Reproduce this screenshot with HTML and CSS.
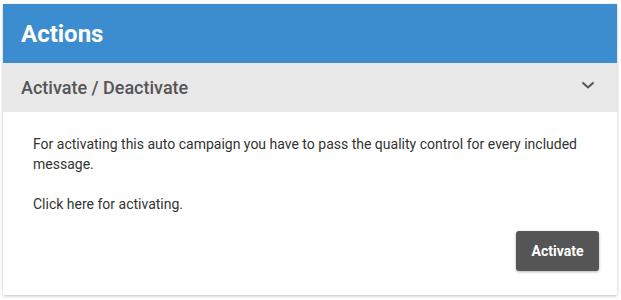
FILE: index.html
```html
<!DOCTYPE html>
<html>
<head>
<meta charset="utf-8">
<link rel="stylesheet" href="styles.css">
</head>
<body>
<div class="card">
  <div class="card-header">Actions</div>
  <div class="section-head">
    <span class="section-title">Activate / Deactivate</span>
    <svg class="chevron" width="14" height="9" viewBox="0 0 14 9"><path d="M1.5 1.5 L7 6.5 L12.5 1.5" fill="none" stroke="#555" stroke-width="2"/></svg>
  </div>
  <div class="section-body">
    <div class="text">
      <p>For activating this auto campaign you have to pass the quality control for every included message.</p>
      <p>Click here for activating.</p>
    </div>
    <div class="actions">
      <button class="btn">Activate</button>
    </div>
  </div>
</div>
</body>
</html>
```
FILE: styles.css
```css
html, body { margin: 0; padding: 0; background: #fff; }
body {
  padding: 4px 4px 5px 3px;
  font-family: Roboto, "Liberation Sans", sans-serif;
}
.card {
  width: 614px;
  height: 291px;
  box-shadow: 0 1px 3px rgba(0,0,0,0.25);
  background: #fff;
  display: flex;
  flex-direction: column;
}
.card-header {
  background: #3c8dd0;
  color: #fff;
  font-size: 24px;
  font-weight: 700;
  height: 59px;
  box-sizing: border-box;
  padding: 0 18px;
  display: flex;
  align-items: center;
}
.section-head {
  background: #e8e8e8;
  height: 49px;
  box-sizing: border-box;
  padding: 0 22px 0 18px;
  display: flex;
  align-items: center;
  justify-content: space-between;
}
.section-title {
  color: #555;
  font-size: 18px;
  font-weight: 500;
}
.chevron { display: block; margin-top: -4px; }
.section-body {
  flex: 1;
  padding: 22px 18px 24px 18px;
  display: flex;
  flex-direction: column;
}
.text {
  padding: 0 0 0 12px;
  color: #333;
  font-size: 14px;
  line-height: 20px;
}
.text p { margin: 0 0 20px 0; }
.text p:last-child { margin-bottom: 0; }
.actions {
  margin-top: auto;
  display: flex;
  justify-content: flex-end;
}
.btn {
  background: #555;
  color: #fff;
  border: none;
  border-radius: 3px;
  font-family: Roboto, "Liberation Sans", sans-serif;
  font-weight: 700;
  font-size: 14px;
  width: 83px;
  height: 40px;
  box-shadow: 0 1px 3px rgba(0,0,0,0.3);
}
```
